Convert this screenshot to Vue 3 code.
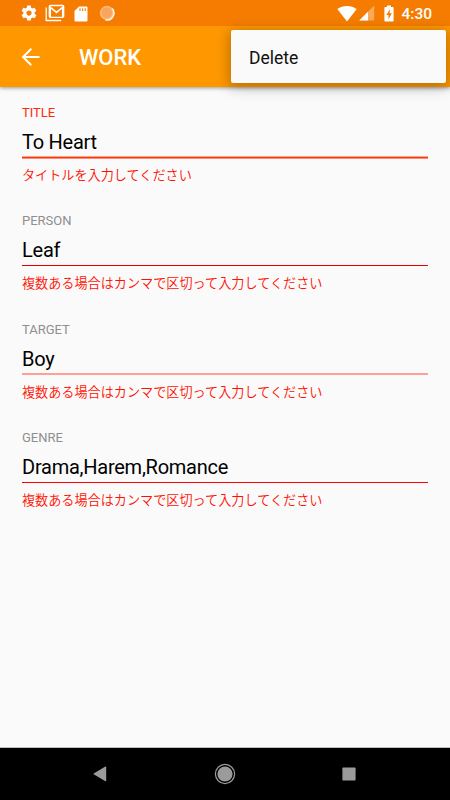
<script setup>
import { ref } from 'vue';

const menuOpen = ref(true);

const fields = ref([
    { label: 'TITLE', value: 'To Heart', error: 'タイトルを入力してください', state: 'focused' },
    { label: 'PERSON', value: 'Leaf', error: '複数ある場合はカンマで区切って入力してください', state: 'dark' },
    { label: 'TARGET', value: 'Boy', error: '複数ある場合はカンマで区切って入力してください', state: 'soft' },
    { label: 'GENRE', value: 'Drama,Harem,Romance', error: '複数ある場合はカンマで区切って入力してください', state: 'plain' }
]);

function closeMenu() {
    menuOpen.value = false;
}
</script>

<template>
    <div class="screen">
        <header class="top">
            <div class="status-bar">
                <div class="status-left">
                    <svg width="18" height="18" viewBox="0 0 24 24">
                        <path fill="#fff" d="M19.43 12.98c.04-.32.07-.64.07-.98s-.03-.66-.07-.98l2.11-1.65c.19-.15.24-.42.12-.64l-2-3.46c-.12-.22-.39-.3-.61-.22l-2.49 1c-.52-.4-1.08-.73-1.69-.98l-.38-2.65C14.46 2.18 14.25 2 14 2h-4c-.25 0-.46.18-.49.42l-.38 2.65c-.61.25-1.17.59-1.69.98l-2.49-1c-.23-.09-.49 0-.61.22l-2 3.46c-.13.22-.07.49.12.64l2.11 1.65c-.04.32-.07.65-.07.98s.03.66.07.98l-2.11 1.65c-.19.15-.24.42-.12.64l2 3.46c.12.22.39.3.61.22l2.49-1c.52.4 1.08.73 1.69.98l.38 2.65c.03.24.24.42.49.42h4c.25 0 .46-.18.49-.42l.38-2.65c.61-.25 1.17-.59 1.69-.98l2.49 1c.23.09.49 0 .61-.22l2-3.46c.12-.22.07-.49-.12-.64l-2.11-1.65zM12 15.5c-1.93 0-3.5-1.57-3.5-3.5s1.57-3.5 3.5-3.5 3.5 1.57 3.5 3.5-1.57 3.5-3.5 3.5z" />
                    </svg>
                    <svg class="mail" width="20" height="18" viewBox="0 0 20 18">
                        <path fill="none" stroke="#fff" stroke-width="1.3" d="M1.2 3.5v13h15" />
                        <rect x="4.3" y="1.5" width="14.4" height="11.8" rx="1" fill="none" stroke="#fff" stroke-width="1.3" />
                        <path fill="none" stroke="#fff" stroke-width="1.7" d="M5.2 13V3.2l6.3 5.2 6.3-5.2V13" />
                    </svg>
                    <svg class="sd" width="14" height="16" viewBox="0 0 14 16">
                        <path fill="#fff" d="M5 .5h7.2c.8 0 1.3.5 1.3 1.3v12.4c0 .8-.5 1.3-1.3 1.3H1.8c-.8 0-1.3-.5-1.3-1.3V5z" />
                        <path stroke="#f57c00" stroke-width="1.1" d="M6 2.3v2.6M8.6 2.3v2.6M11.2 2.3v2.6" />
                    </svg>
                    <svg class="sync" width="16" height="16" viewBox="0 0 16 16">
                        <circle cx="8" cy="8" r="7.2" fill="#fbb271" />
                        <circle cx="7.7" cy="7.7" r="5.8" fill="#f9a65c" stroke="#fdd0a6" stroke-width="1" stroke-dasharray="1 1" />
                        <path fill="none" stroke="#fff8e8" stroke-width="1.5" d="M13.2 3.5A7 7 0 0 1 6.5 14.9" />
                    </svg>
                </div>
                <div class="status-right">
                    <svg width="20" height="17" viewBox="0 0 20 17">
                        <path fill="#fff" d="M.3 4C6 0 14 0 19.7 4L10 16.4z" />
                    </svg>
                    <svg class="signal" width="16" height="16" viewBox="0 0 16 16">
                        <path fill="#fff" fill-opacity=".35" d="M15.2.5v15H.2z" />
                        <path fill="#fff" d="M9 6.7v8.8H.2z" />
                    </svg>
                    <svg class="battery" width="10" height="17" viewBox="0 0 10 17">
                        <path fill="#fff" d="M3 .5h4V2h1.6c.6 0 1 .4 1 1v12.4c0 .6-.4 1-1 1H1.4c-.6 0-1-.4-1-1V3c0-.6.4-1 1-1H3z" />
                        <path fill="#f57c00" d="M6 4.2 2.3 10h2.2v4.3L7.9 8.2H5.6z" />
                    </svg>
                    <span class="clock">4:30</span>
                </div>
            </div>
            <div class="app-bar">
                <svg class="back" width="20" height="20" viewBox="0 0 20 20">
                    <path fill="none" stroke="#fff" stroke-width="2" d="M18.5 10H3M10.3 1.8 2.1 10l8.2 8.2" />
                </svg>
                <h1>WORK</h1>
            </div>
            <div v-if="menuOpen" class="menu">
                <button class="menu-item" @click="closeMenu">Delete</button>
            </div>
        </header>

        <main class="form">
            <label v-for="field in fields" :key="field.label" class="field" :class="field.state">
                <span class="label">{{ field.label }}</span>
                <input type="text" v-model="field.value">
                <span class="line"></span>
                <span class="error">{{ field.error }}</span>
            </label>
        </main>

        <nav class="nav-bar">
            <svg width="14" height="16" viewBox="0 0 14 16">
                <path fill="#9b9b9b" d="M12.4.6c.4-.2.8 0 .8.4v13.8c0 .4-.4.6-.8.4L.7 8.3c-.4-.2-.4-.6 0-.8z" />
            </svg>
            <svg width="22" height="22" viewBox="0 0 22 22">
                <circle cx="11" cy="11" r="9.6" fill="none" stroke="#9b9b9b" stroke-width="1.2" />
                <circle cx="11" cy="11" r="7.6" fill="#9b9b9b" />
            </svg>
            <svg width="14" height="14" viewBox="0 0 14 14">
                <rect x=".4" y=".4" width="13.2" height="13.2" rx=".8" fill="#9b9b9b" />
            </svg>
        </nav>
    </div>
</template>

<style>
body {
    margin: 0;
}
</style>

<style scoped>
.screen {
    display: flex;
    flex-direction: column;
    height: 800px;
    overflow: hidden;
    background-color: #fafafa;
    font-family: Roboto, "Noto Sans CJK JP", sans-serif;
}

.screen svg {
    display: block;
    flex-shrink: 0;
}

.top {
    position: relative;
    flex-shrink: 0;
    box-shadow: 0 1px 4px rgba(0, 0, 0, 0.4);
}

.status-bar {
    display: flex;
    justify-content: space-between;
    align-items: center;
    box-sizing: border-box;
    height: 26px;
    padding: 0 18px 0 19.5px;
    background-color: #f57c00;
}

.status-left,
.status-right {
    display: flex;
    align-items: center;
}

.mail {
    margin-left: 7.5px;
}

.sd {
    margin: 1px 0 0 9px;
}

.sync {
    margin-left: 11px;
}

.signal {
    margin-left: 2px;
}

.battery {
    margin-left: 9px;
}

.clock {
    margin: 1px 0 0 7px;
    color: #fff;
    font-size: 15.5px;
    font-weight: 500;
    line-height: 18px;
}

.app-bar {
    display: flex;
    align-items: center;
    height: 61px;
    padding-left: 21px;
    background-color: #ff9800;
}

h1 {
    margin: 2px 0 0 38px;
    color: #fff;
    font-size: 22px;
    font-weight: 500;
    line-height: 26px;
}

.menu {
    position: absolute;
    top: 30px;
    right: 4px;
    z-index: 1;
    width: 215px;
    border-radius: 2px;
    background-color: #fafafa;
    box-shadow: 0 3px 13px 2px rgba(0, 0, 0, 0.26);
}

.menu-item {
    display: block;
    width: 100%;
    height: 53px;
    padding: 2px 18px 0;
    border: none;
    background: none;
    color: #111;
    font-family: inherit;
    font-size: 17.5px;
    text-align: left;
}

.form {
    display: grid;
    flex: 1;
    grid-template-rows: 108px 109px 108px 108px;
    padding: 13px 22px 0;
}

.field {
    display: flex;
    flex-direction: column;
}

.label {
    height: 26px;
    color: #8f8f8f;
    font-size: 13px;
    line-height: 26px;
}

.field input {
    height: 30px;
    padding: 1px 0 0;
    border: none;
    outline: none;
    background: none;
    color: #000;
    font-family: inherit;
    font-size: 20px;
    letter-spacing: -0.25px;
    line-height: 30px;
    box-sizing: border-box;
}

.line {
    height: 1px;
    margin: 1px 0;
    background-color: #f00;
}

.focused .label {
    color: #ff2a0a;
}

.focused .line {
    height: 3px;
    margin: 0;
    background: linear-gradient(#ffa794 33.3%, #ff3503 33.3% 66.6%, #ff8a75 66.6%);
}

.dark .line {
    background-color: #e80000;
}

.soft .line {
    height: 2px;
    margin: 0 0 1px;
    background-color: #ff9f95;
}

.error {
    height: 32px;
    color: #ff1000;
    font-family: "Noto Sans CJK JP", sans-serif;
    font-size: 13.13px;
    font-weight: 350;
    line-height: 32px;
    white-space: nowrap;
}

.nav-bar {
    display: flex;
    flex-shrink: 0;
    justify-content: space-between;
    align-items: center;
    box-sizing: border-box;
    height: 53px;
    padding: 0 94px 0 93px;
    border-top: 1px solid #bdbdbd;
    background-color: #000;
}
</style>
